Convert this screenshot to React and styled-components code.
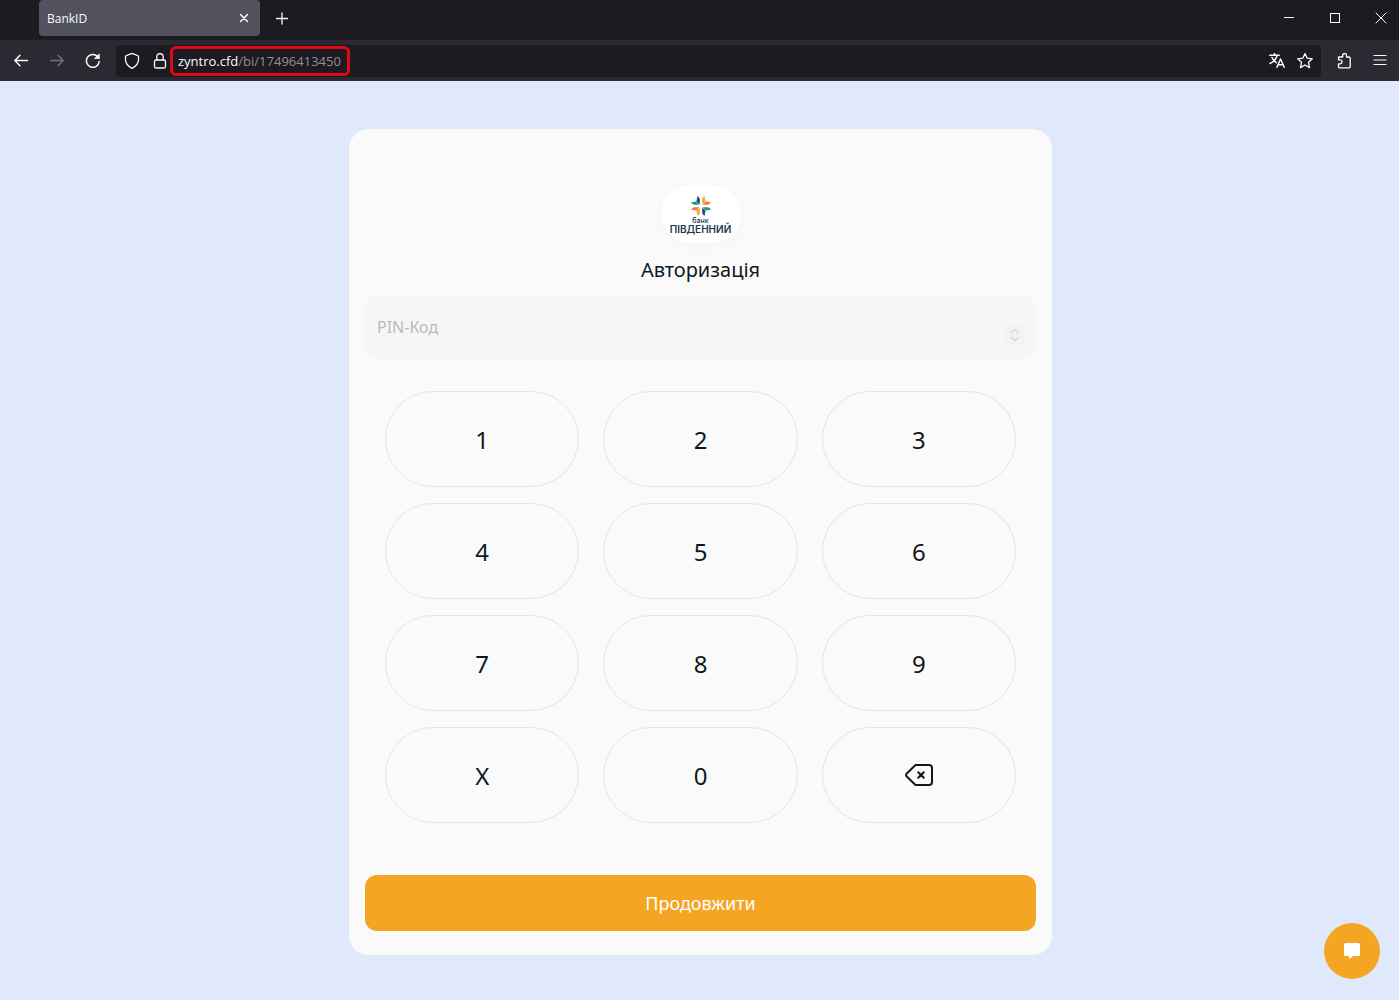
import React from "react";
import styled, { createGlobalStyle } from "styled-components";

const GlobalStyle = createGlobalStyle`
  *, *::before, *::after { box-sizing: border-box; }
  html, body, #root { min-height: 100vh; }
  body {
    margin: 0;
    background: #e0e9fc;
    color: #11181c;
    font-family: "Noto Sans", "Open Sans", sans-serif;
  }
  button, input { font: inherit; color: inherit; }
  svg { display: block; flex: none; }
`;

const Chrome = styled.header`
  font-family: "Open Sans", "Noto Sans", sans-serif;
  color: #fbfbfe;
`;

const TabStrip = styled.div`
  display: flex;
  align-items: center;
  height: 40px;
  padding: 0 0 4px 39px;
  background: #1c1b22;
`;

const Tab = styled.div`
  display: flex;
  align-items: center;
  justify-content: space-between;
  width: 221px;
  height: 36px;
  padding: 0 6px 0 8px;
  border-radius: 4px;
  background: #52525e;
  font-size: 12px;
`;

const ChromeButton = styled.button`
  display: grid;
  place-items: center;
  flex: none;
  width: ${(p) => p.$width}px;
  height: ${(p) => p.$height || 32}px;
  padding: 0;
  border: 0;
  background: none;
  color: ${(p) => (p.$muted ? "#74737b" : "#fbfbfe")};
`;

const WindowControls = styled.div`
  display: flex;
  margin-left: auto;
  margin-right: -5px;
`;

const Toolbar = styled.div`
  display: flex;
  align-items: center;
  height: 41px;
  padding: 0 1px 0 3px;
  overflow: hidden;
  background: #2b2a33;
`;

const AddressBar = styled.div`
  display: flex;
  align-items: center;
  flex: 1;
  min-width: 0;
  height: 32px;
  margin: 0 5px;
  padding: 0 2px;
  border-radius: 4px;
  background: #1c1b22;
`;

const Address = styled.span`
  flex: none;
  padding: 2px 6px 2px 5px;
  margin-left: -4px;
  margin-right: auto;
  border: 3px solid #e30613;
  border-radius: 6px;
  color: #8f8f98;
  font-size: 13px;
  line-height: 20px;
  white-space: nowrap;
`;

const Host = styled.span`
  color: #fbfbfe;
`;

const Main = styled.main`
  padding: 48px 16px 45px 18px;
`;

const Card = styled.section`
  display: flex;
  flex-direction: column;
  width: 100%;
  max-width: 703px;
  margin: 0 auto;
  padding: 56px 16px 24px;
  border-radius: 20px;
  background: #fafafa;
`;

const Logo = styled.div`
  display: flex;
  flex-direction: column;
  align-items: center;
  align-self: center;
  width: 80px;
  height: 58px;
  padding-top: 10px;
  border-radius: 29px;
  background: #ffffff;
  box-shadow: 0 4px 20px rgba(0, 0, 0, 0.02);
  color: #1d3a4d;
  font-family: "Inter", "Noto Sans", sans-serif;
`;

const LogoLine = styled.span`
  font-size: ${(p) => p.$size}px;
  font-weight: ${(p) => p.$weight};
  line-height: 8px;
`;

const Title = styled.h1`
  margin: 12px 0 10px;
  font-size: 20px;
  font-weight: 400;
  line-height: 30px;
  text-align: center;
`;

const Field = styled.label`
  display: flex;
  align-items: center;
  height: 65px;
  padding: 0 12px;
  border-radius: 14px;
  background: #f6f6f6;
`;

const PinInput = styled.input`
  flex: 1;
  min-width: 0;
  padding: 0 0 2px;
  border: 0;
  outline: 0;
  background: none;
  font-size: 16px;
  line-height: 24px;
  &::placeholder { color: #b9b9bc; opacity: 1; }
`;

const Spinner = styled.span`
  display: grid;
  place-items: center;
  align-self: flex-end;
  width: 18px;
  height: 18px;
  margin-bottom: 16px;
  background: #f3f3f3;
  color: #d6d6da;
`;

const Keypad = styled.div`
  display: grid;
  grid-template-columns: repeat(3, 1fr);
  gap: 16px 24px;
  margin: 31px 20px 52px;
`;

const Key = styled.button`
  display: grid;
  place-items: center;
  height: 96px;
  padding: 2px 0 0;
  border: 1px solid #e4e4e7;
  border-radius: 48px;
  background: transparent;
  font-size: 24px;
  line-height: 32px;
`;

const Submit = styled.button`
  height: 56px;
  border: 0;
  border-radius: 12px;
  background: #f5a524;
  color: #ffffff;
  font-size: 18px;
`;

const ChatButton = styled.button`
  position: fixed;
  right: 19px;
  bottom: 21px;
  display: grid;
  place-items: center;
  width: 56px;
  height: 56px;
  padding: 0;
  border: 0;
  border-radius: 50%;
  background: #f5a524;
`;

function Icon({ size = 16, width = 1.3, children }) {
  return (
    <svg width={size} height={size} viewBox={`0 0 ${size} ${size}`} fill="none" stroke="currentColor"
      strokeWidth={width} strokeLinecap="round" strokeLinejoin="round" aria-hidden="true">
      {children}
    </svg>
  );
}

const starQuadrants = [
  { flip: "1 1", upright: "#f9a72b", level: "#f47b29" },
  { flip: "-1 1", upright: "#1d5470", level: "#15979b" },
  { flip: "-1 -1", upright: "#f9a72b", level: "#f47b29" },
  { flip: "1 -1", upright: "#1d5470", level: "#15979b" },
];

function BankStar() {
  return (
    <svg width="22" height="22" viewBox="-11 -11 22 22" aria-hidden="true">
      {starQuadrants.map(({ flip, upright, level }) => (
        <g key={flip} transform={`scale(${flip})`}>
          <path d="M1.2-1.6V-7.2L3.4-10.2 4.6-4.6Z" fill={upright} />
          <path d="M1.6-1.2 5-4.4 10.4-3.4 7.2-1.2Z" fill={level} />
        </g>
      ))}
    </svg>
  );
}

const keys = ["1", "2", "3", "4", "5", "6", "7", "8", "9", "X", "0"];

export default function App() {
  return (
    <>
      <GlobalStyle />
      <Chrome>
        <TabStrip>
          <Tab>
            <span>BankID</span>
            <ChromeButton type="button" $width={20} $height={20} aria-label="Close tab">
              <Icon width={1.5}><path d="M4.500 4.500l7 7M11.500 4.500l-7 7" /></Icon>
            </ChromeButton>
          </Tab>
          <ChromeButton type="button" $width={44} aria-label="New tab">
            <Icon><path d="M8 3v11M2.500 8.500h11" /></Icon>
          </ChromeButton>
          <WindowControls>
            <ChromeButton type="button" $width={46} aria-label="Minimize">
              <Icon size={12} width={1}><path d="M1 5.500h10" shapeRendering="crispEdges" /></Icon>
            </ChromeButton>
            <ChromeButton type="button" $width={46} aria-label="Maximize">
              <Icon size={12} width={1}><path d="M1.500 1.500h9v9h-9z" shapeRendering="crispEdges" /></Icon>
            </ChromeButton>
            <ChromeButton type="button" $width={46} aria-label="Close">
              <Icon size={12} width={1}><path d="M1 1l10 10M11 1L1 11" /></Icon>
            </ChromeButton>
          </WindowControls>
        </TabStrip>
        <Toolbar>
          <ChromeButton type="button" $width={36} aria-label="Back">
            <Icon width={1.5}><path d="M14.500 7.500H1.800M7 2.300L1.800 7.500 7 12.700" /></Icon>
          </ChromeButton>
          <ChromeButton type="button" $width={36} $muted aria-label="Forward">
            <Icon width={1.3}><path d="M1.500 7.500h12.700M9 2.300l5.200 5.200L9 12.700" /></Icon>
          </ChromeButton>
          <ChromeButton type="button" $width={36} aria-label="Reload">
            <Icon width={1.5}>
              <path d="M14.200 8.500A6.400 6.400 0 1 1 12.400 3.400L14 5" />
              <path d="M14.200 1.200v4.300H9.900z" fill="currentColor" strokeWidth=".8" />
            </Icon>
          </ChromeButton>
          <AddressBar>
            <ChromeButton type="button" $width={28} aria-label="Tracking protection">
              <Icon><path d="M8 .3l6.500 2.700v3.500c0 3.800-2.500 6.800-6.500 8.800-4-2-6.500-5-6.500-8.800V3z" /></Icon>
            </ChromeButton>
            <ChromeButton type="button" $width={28} aria-label="Connection details">
              <Icon><rect x="2.500" y="7" width="11" height="8" rx="1.500" /><path d="M4.800 7V3.700a3.200 3.200 0 0 1 6.400 0V7" /></Icon>
            </ChromeButton>
            <Address><Host>zyntro.cfd</Host>/bi/17496413450</Address>
            <ChromeButton type="button" $width={28} aria-label="Translate">
              <Icon width={1.5}><path d="M.8 2.300h9.400M5.500.700v1.600M8.200 2.500C7.200 6 4.500 8.800 1 10.500M3 4.500C4 7 5.500 8.500 7.400 9.600M8 14.200L11.500 6l3.700 8.200M9.200 11.800h5" /></Icon>
            </ChromeButton>
            <ChromeButton type="button" $width={28} aria-label="Bookmark">
              <Icon><path d="M8 .5l2.200 4.700 5.100.6-3.800 3.500 1 5.300L8 12l-4.500 2.600 1-5.300L.7 5.800l5.100-.6z" /></Icon>
            </ChromeButton>
          </AddressBar>
          <ChromeButton type="button" $width={36} aria-label="Extensions">
            <Icon><path d="M2.500 6.800V4h4.200V2.400a1.900 1.900 0 0 1 3.800 0V4H13a1.200 1.200 0 0 1 1.200 1.200v8.400a1.200 1.200 0 0 1-1.200 1.200H3.700a1.200 1.200 0 0 1-1.200-1.200v-2.800H4a1.900 1.900 0 0 0 0-3.900z" /></Icon>
          </ChromeButton>
          <ChromeButton type="button" $width={36} aria-label="Menu">
            <Icon width={1.2}><path d="M2 2.500h12M2 7h12M2 11.500h12" /></Icon>
          </ChromeButton>
        </Toolbar>
      </Chrome>
      <Main>
        <Card>
          <Logo>
            <BankStar />
            <LogoLine $size={7} $weight={500}>банк</LogoLine>
            <LogoLine $size={10} $weight={600}>ПІВДЕННИЙ</LogoLine>
          </Logo>
          <Title>Авторизація</Title>
          <Field>
            <PinInput placeholder="PIN-Код" aria-label="PIN-Код" readOnly />
            <Spinner aria-hidden="true">
              <Icon width={1.3}><path d="M4.500 5.500L8 2.500l3.500 3M4.500 10.500l3.500 3 3.500-3" /></Icon>
            </Spinner>
          </Field>
          <Keypad>
            {keys.map((label) => <Key type="button" key={label}>{label}</Key>)}
            <Key type="button" aria-label="Backspace">
              <Icon size={28} width={2}>
                <path d="M10.500 3H24a3 3 0 0 1 3 3v14a3 3 0 0 1-3 3H10.500L1.500 14.200a2 2 0 0 1 0-2.400z" />
                <path d="M13.200 10.200l5.600 5.600M18.800 10.200l-5.600 5.600" />
              </Icon>
            </Key>
          </Keypad>
          <Submit type="button">Продовжити</Submit>
        </Card>
      </Main>
      <ChatButton type="button" aria-label="Chat">
        <svg width="16" height="16" viewBox="0 0 16 16" fill="#fff" aria-hidden="true">
          <path d="M1.500 0h13A1.500 1.500 0 0 1 16 1.500v10a1.500 1.500 0 0 1-1.500 1.500H9l-3.500 3H5v-3H1.500A1.500 1.500 0 0 1 0 11.500v-10A1.500 1.500 0 0 1 1.500 0z" />
        </svg>
      </ChatButton>
    </>
  );
}
